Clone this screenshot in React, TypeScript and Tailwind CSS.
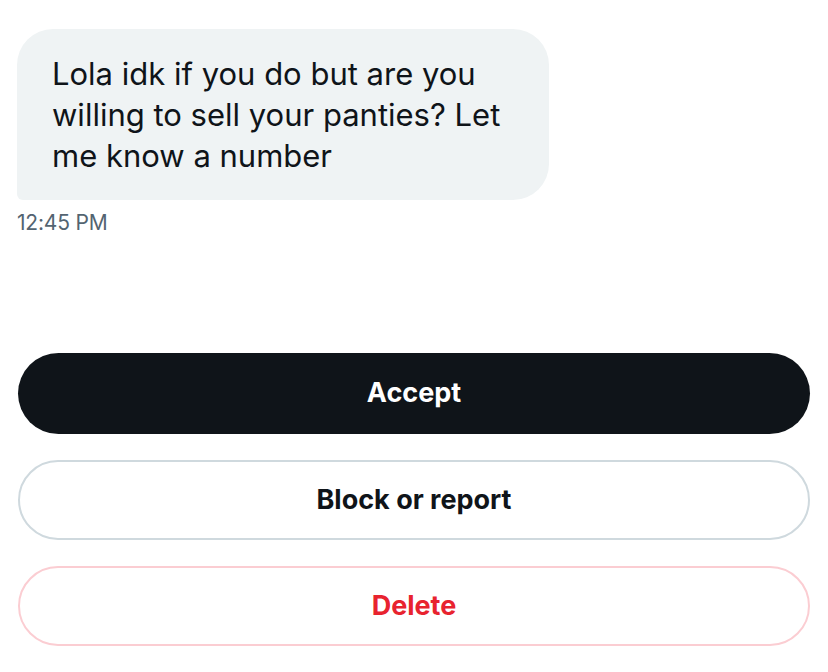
import React from "react";

const font = { fontFamily: "Inter, 'Noto Sans', sans-serif" };

const App: React.FC = () => {
  return (
    <div className="w-[828px] h-[672px] bg-white overflow-hidden" style={font}>
      <div className="pt-[29px] pl-[17px]">
        <div className="w-[532px] h-[171px] bg-[#eff3f4] rounded-[36px] rounded-bl-[6px] pl-[35px] pt-[24px]">
          <p className="text-[31px] leading-[41px] text-[#0f1419] whitespace-nowrap">
            Lola idk if you do but are you
            <br />
            willing to sell your panties? Let
            <br />
            me know a number
          </p>
        </div>
        <div className="mt-[10px] text-[21px] leading-[25px] text-[#536471] tracking-[-0.2px]">
          12:45 PM
        </div>
      </div>

      <div className="mt-[118px] px-[18px] flex flex-col gap-[26px]">
        <button className="h-[81px] w-full rounded-full bg-[#0f1419] text-white text-[27px] font-bold">
          Accept
        </button>
        <button className="h-[80px] w-full rounded-full border-2 border-[#cfd9de] bg-white text-[#0f1419] text-[27px] font-bold">
          Block or report
        </button>
        <button className="h-[80px] w-full rounded-full border-2 border-[#fbcdd2] bg-white text-[#e8232f] text-[27px] font-bold">
          Delete
        </button>
      </div>
    </div>
  );
};

export default App;
